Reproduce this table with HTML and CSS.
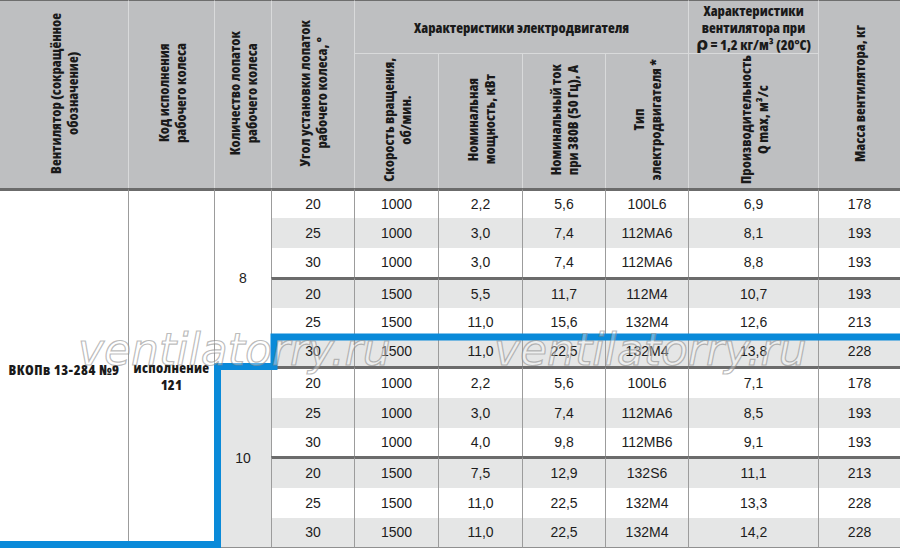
FILE: index.html
```html
<!DOCTYPE html>
<html lang="ru">
<head>
<meta charset="utf-8">
<title>ВКОПв 13-284 №9</title>
<link rel="stylesheet" href="styles.css">
</head>
<body>
<div class="sheet">
  <table class="spec">
    <colgroup>
      <col class="w1"><col class="w2"><col class="w3"><col class="w4"><col class="w5">
      <col class="w6"><col class="w7"><col class="w8"><col class="w9"><col class="w10">
    </colgroup>
    <thead>
      <tr class="h1">
        <th rowspan="2" class="first"><div class="vt">Вентилятор (сокращённое<br>обозначение)</div></th>
        <th rowspan="2"><div class="vt">Код исполнения<br>рабочего колеса</div></th>
        <th rowspan="2"><div class="vt">Количество лопаток<br>рабочего колеса</div></th>
        <th rowspan="2"><div class="vt">Угол установки лопаток<br>рабочего колеса, °</div></th>
        <th colspan="4" class="group">Характеристики электродвигателя</th>
        <th class="group group2">Характеристики<br>вентилятора при<br><span class="rho">ρ</span> = 1,2 кг/м³ (20°С)</th>
        <th rowspan="2"><div class="vt">Масса вентилятора, кг</div></th>
      </tr>
      <tr class="h2">
        <th><div class="vt">Скорость вращения,<br>об/мин.</div></th>
        <th><div class="vt">Номинальная<br>мощность, кВт</div></th>
        <th><div class="vt">Номинальный ток<br>при 380В (50 Гц), А</div></th>
        <th><div class="vt">Тип<br>электродвигателя *</div></th>
        <th><div class="vt">Производительность<br>Q max, м³/с</div></th>
      </tr>
    </thead>
    <tbody>
      <tr class="r1">
        <td rowspan="12" class="first fan">ВКОПв 13-284 №9</td>
        <td rowspan="12" class="code">исполнение<br>121</td>
        <td rowspan="6" class="blades">8</td>
        <td>20</td><td>1000</td><td>2,2</td><td>5,6</td><td>100L6</td><td>6,9</td><td>178</td>
      </tr>
      <tr class="r2 alt">
        <td>25</td><td>1000</td><td>3,0</td><td>7,4</td><td>112MA6</td><td>8,1</td><td>193</td>
      </tr>
      <tr class="r3">
        <td>30</td><td>1000</td><td>3,0</td><td>7,4</td><td>112MA6</td><td>8,8</td><td>193</td>
      </tr>
      <tr class="r4 alt sep">
        <td>20</td><td>1500</td><td>5,5</td><td>11,7</td><td>112M4</td><td>10,7</td><td>193</td>
      </tr>
      <tr class="r5">
        <td>25</td><td>1500</td><td>11,0</td><td>15,6</td><td>132M4</td><td>12,6</td><td>213</td>
      </tr>
      <tr class="r6 alt">
        <td>30</td><td>1500</td><td>11,0</td><td>22,5</td><td>132M4</td><td>13,8</td><td>228</td>
      </tr>
      <tr class="r7 sep">
        <td rowspan="6" class="blades blades-alt">10</td>
        <td>20</td><td>1000</td><td>2,2</td><td>5,6</td><td>100L6</td><td>7,1</td><td>178</td>
      </tr>
      <tr class="r8 alt">
        <td>25</td><td>1000</td><td>3,0</td><td>7,4</td><td>112MA6</td><td>8,5</td><td>193</td>
      </tr>
      <tr class="r9">
        <td>30</td><td>1000</td><td>4,0</td><td>9,8</td><td>112MB6</td><td>9,1</td><td>193</td>
      </tr>
      <tr class="r10 alt sep">
        <td>20</td><td>1500</td><td>7,5</td><td>12,9</td><td>132S6</td><td>11,1</td><td>213</td>
      </tr>
      <tr class="r11">
        <td>25</td><td>1500</td><td>11,0</td><td>22,5</td><td>132M4</td><td>13,3</td><td>228</td>
      </tr>
      <tr class="r12 alt last">
        <td>30</td><td>1500</td><td>11,0</td><td>22,5</td><td>132M4</td><td>14,2</td><td>228</td>
      </tr>
    </tbody>
  </table>

  <svg class="route" width="900" height="548" viewBox="0 0 900 548" aria-hidden="true">
    <polyline points="900,337 274,337 274,366.5 217.5,366.5 217.5,544.5 0,544.5" fill="none" stroke="#0a8ad9" stroke-width="7" stroke-linejoin="miter"/>
  </svg>

  <span class="wm wm-a">ventilatorry.ru</span>
  <span class="wm wm-b">ventilatorry.ru</span>
</div>
</body>
</html>
```

FILE: styles.css
```css
html, body {
  margin: 0;
  padding: 0;
  background: #ffffff;
}

.sheet {
  position: relative;
  width: 900px;
  height: 548px;
  overflow: hidden;
  font-family: "Liberation Sans", Arial, sans-serif;
  color: #1c1c1c;
}

.spec {
  width: 900px;
  table-layout: fixed;
  border-collapse: separate;
  border-spacing: 0;
}

.w1 { width: 128px; }
.w2 { width: 86px; }
.w3 { width: 57px; }
.w4 { width: 83px; }
.w5 { width: 84px; }
.w6 { width: 84px; }
.w7 { width: 83px; }
.w8 { width: 83px; }
.w9 { width: 130px; }
.w10 { width: 82px; }

/* header */
.spec th {
  background: #bebfc1;
  padding: 0;
  font-family: "Open Sans", "DejaVu Sans Condensed", sans-serif;
  font-stretch: 77%;
  font-weight: 760;
  font-size: 14px;
  line-height: 17px;
  color: #1a1a1a;
  text-align: center;
  vertical-align: middle;
  border-left: 1px solid #d9dadb;
  overflow: hidden;
}

.spec th.first { border-left: 0; }

.h1 { height: 54px; }
.h1 th { border-top: 1px solid #6e6e6e; }
.h2 { height: 134px; }

.group {
  border-bottom: 1px solid #d9dadb;
}

.group2 {
  line-height: 15px;
  padding-top: 1px;
}

.rho {
  font-size: 17px;
  font-family: "DejaVu Sans", sans-serif;
  font-stretch: 100%;
  font-weight: bold;
}

.vt {
  display: inline-block;
  writing-mode: vertical-rl;
  transform: rotate(180deg);
  text-align: center;
  white-space: nowrap;
  max-height: 182px;
}

/* body */
.spec td {
  padding: 0;
  text-align: center;
  vertical-align: middle;
  font-size: 14px;
  line-height: 17px;
  border-left: 1px solid #9c9c9c;
  background: #ffffff;
  white-space: nowrap;
}

.spec td.first { border-left: 0; }

.spec tr.alt td { background: #e5e6e6; }
.spec tr.alt td.blades,
.spec tr.alt td.fan,
.spec tr.alt td.code { background: #ffffff; }
.spec td.blades-alt,
.spec tr.alt td.blades-alt { background: #e5e6e6; }

.r1 td { border-top: 3px solid #6b6b6b; }
.sep td { border-top: 3px solid #6b6b6b; }
.last td, td.fan, td.code, td.blades-alt { border-bottom: 1px solid #909090; }

.r1 { height: 30px; }
.r2 { height: 30px; }
.r3 { height: 29px; }
.r4 { height: 31px; }
.r5 { height: 29px; }
.r6 { height: 29px; }
.r7 { height: 32px; }
.r8 { height: 30px; }
.r9 { height: 28px; }
.r10 { height: 32px; }
.r11 { height: 30px; }
.r12 { height: 30px; }

.fan, .code {
  font-family: "Open Sans", "DejaVu Sans Condensed", sans-serif;
  font-weight: 760;
  color: #1a1a1a;
}

.fan {
  font-size: 15px;
  font-stretch: 80%;
  letter-spacing: 0.5px;
}

.code {
  font-size: 15.5px;
  font-stretch: 84%;
  letter-spacing: 0.3px;
  line-height: 19px;
  padding-top: 14px !important;
}

/* overlays */
.route {
  position: absolute;
  left: 0;
  top: 0;
}

.wm {
  position: absolute;
  top: 328px;
  font-family: "DejaVu Sans", sans-serif;
  font-style: italic;
  font-size: 44px;
  line-height: 44px;
  white-space: nowrap;
  color: rgba(255, 255, 255, 0.35);
  -webkit-text-stroke: 1.2px rgba(130, 130, 130, 0.55);
}

.wm-a { left: 78px; }
.wm-b { left: 494px; }
```
